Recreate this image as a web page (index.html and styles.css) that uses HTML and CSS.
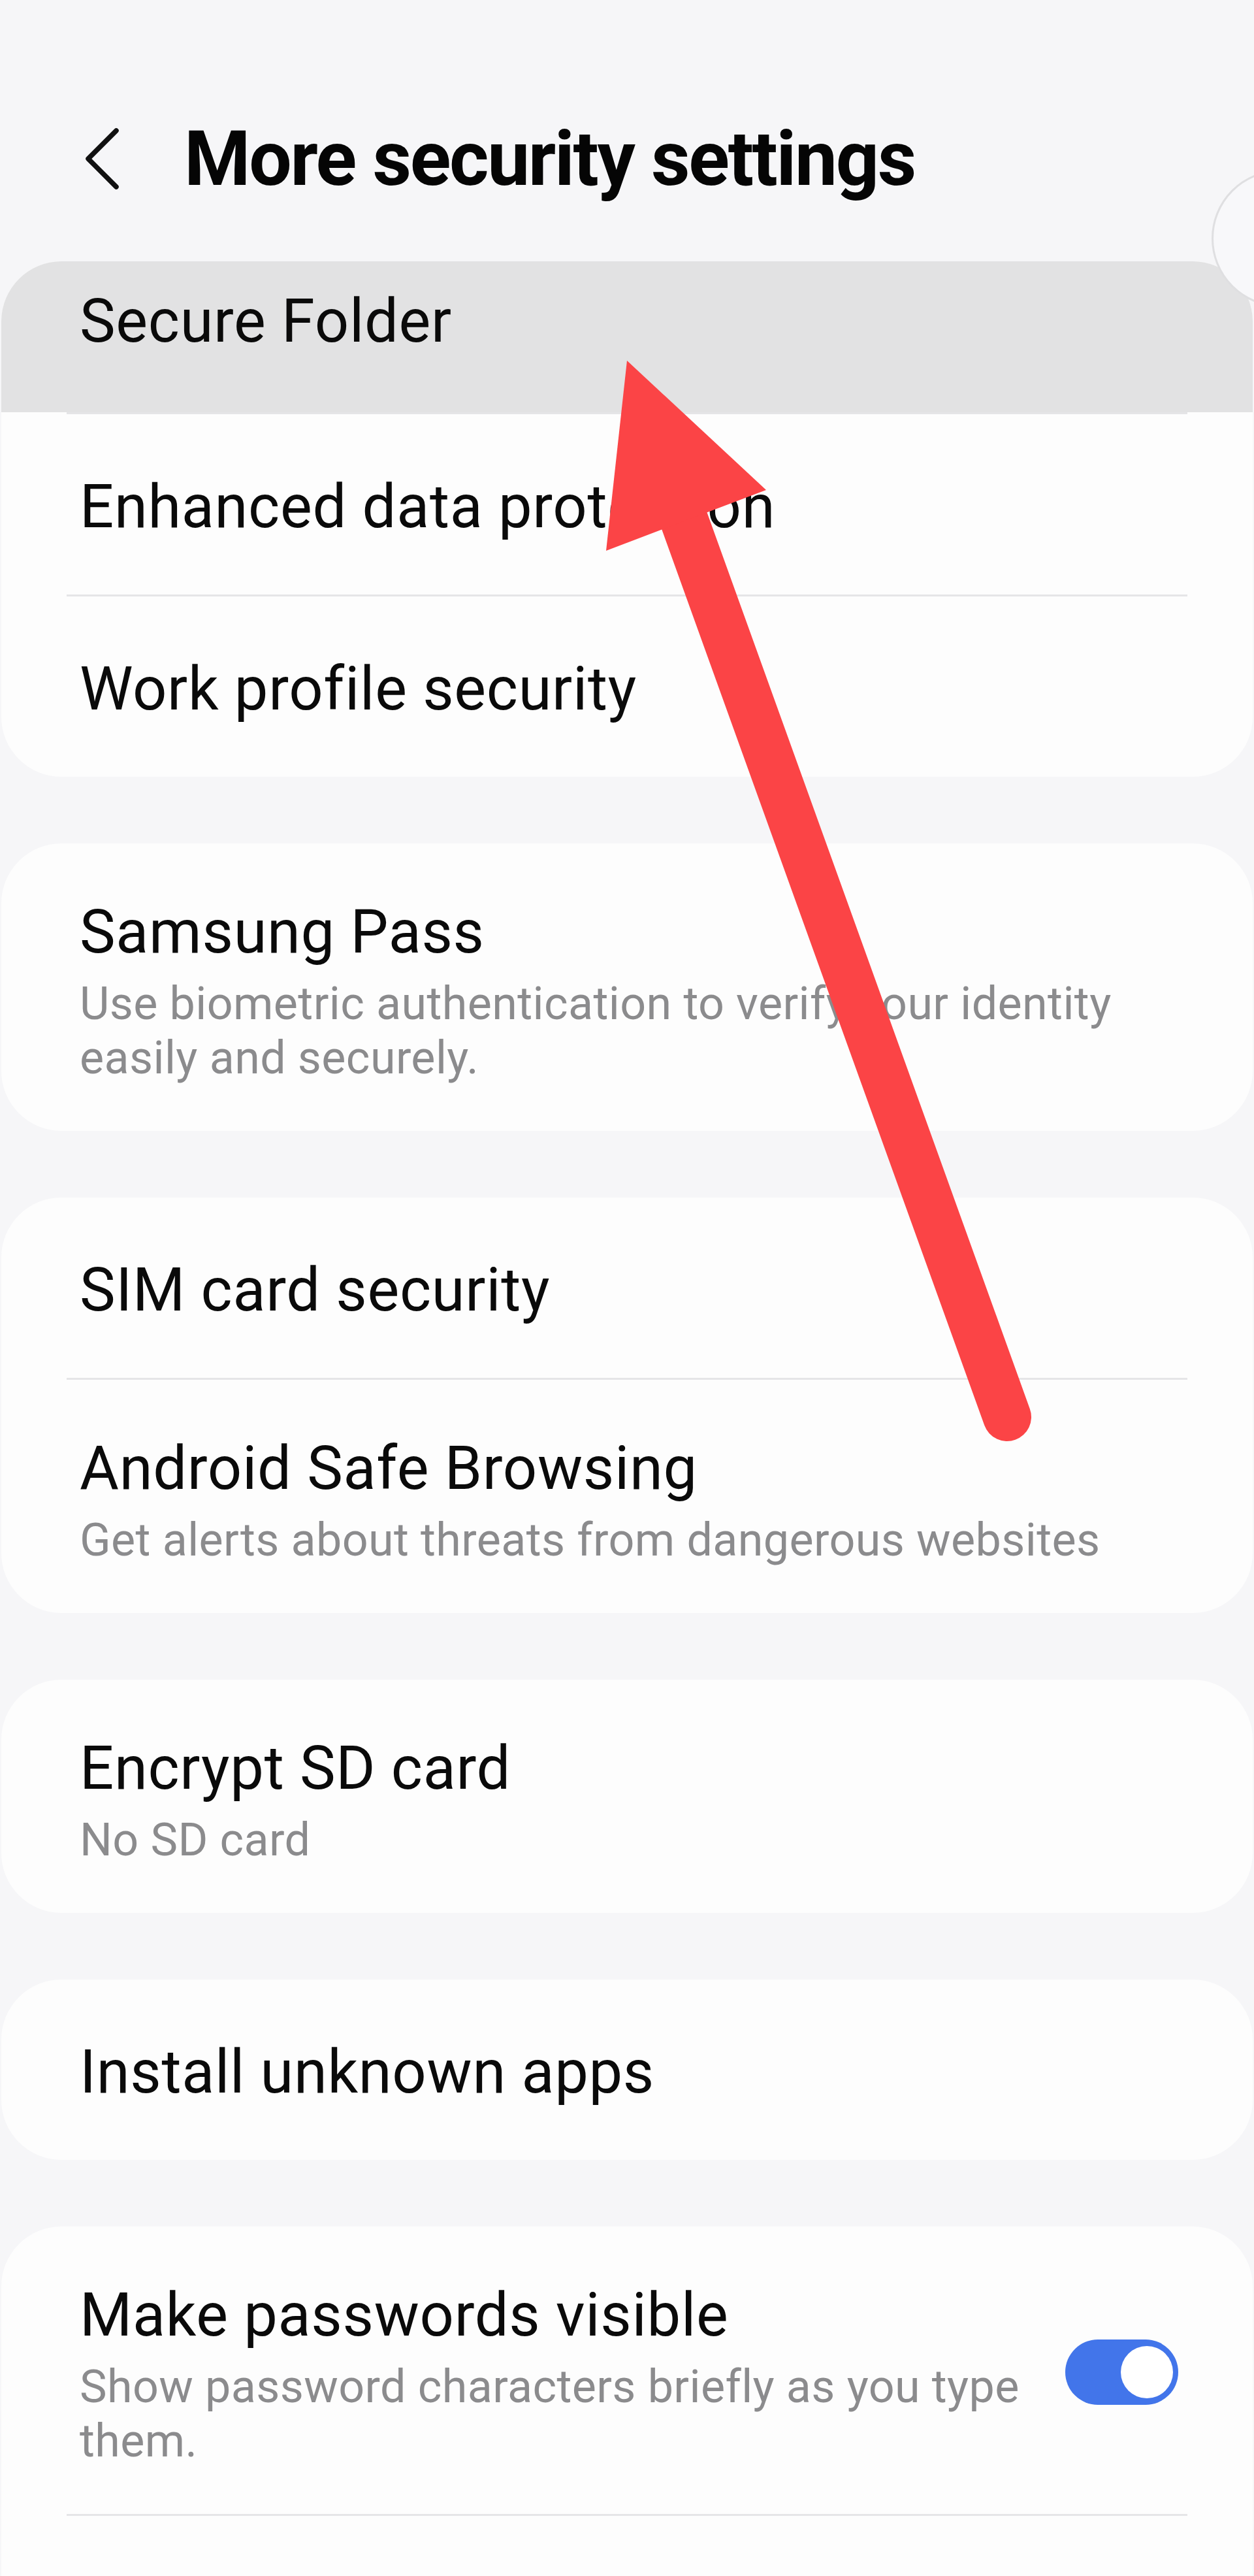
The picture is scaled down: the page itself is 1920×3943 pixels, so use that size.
FILE: index.html
```html
<!DOCTYPE html>
<html lang="en">

<head>
    <meta charset="UTF-8">
    <meta name="viewport" content="width=device-width, initial-scale=1.0">
    <title>More security settings</title>
    <link rel="stylesheet" href="styles.css">
</head>

<body>

    <div class="screen">

        <div class="top-bar">
            <svg class="back" viewBox="0 0 60 100" width="60" height="100">
                <polyline points="53,7 10,50 53,93" />
            </svg>
            <h1>More security settings</h1>
        </div>

        <div class="list">

            <div class="card">
                <div class="row row-first pressed">
                    <div class="row-text">
                        <div class="title">Secure Folder</div>
                    </div>
                </div>
                <div class="divider"></div>
                <div class="row">
                    <div class="row-text">
                        <div class="title">Enhanced data protection</div>
                    </div>
                </div>
                <div class="divider"></div>
                <div class="row">
                    <div class="row-text">
                        <div class="title">Work profile security</div>
                    </div>
                </div>
            </div>

            <div class="card">
                <div class="row has-sub">
                    <div class="row-text">
                        <div class="title">Samsung Pass</div>
                        <div class="sub">Use biometric authentication to verify your identity easily and securely.</div>
                    </div>
                </div>
            </div>

            <div class="card">
                <div class="row">
                    <div class="row-text">
                        <div class="title">SIM card security</div>
                    </div>
                </div>
                <div class="divider"></div>
                <div class="row has-sub">
                    <div class="row-text">
                        <div class="title">Android Safe Browsing</div>
                        <div class="sub">Get alerts about threats from dangerous websites</div>
                    </div>
                </div>
            </div>

            <div class="card">
                <div class="row has-sub">
                    <div class="row-text">
                        <div class="title">Encrypt SD card</div>
                        <div class="sub">No SD card</div>
                    </div>
                </div>
            </div>

            <div class="card">
                <div class="row">
                    <div class="row-text">
                        <div class="title">Install unknown apps</div>
                    </div>
                </div>
            </div>

            <div class="card">
                <div class="row has-sub">
                    <div class="row-text">
                        <div class="title">Make passwords visible</div>
                        <div class="sub">Show password characters briefly as you type them.</div>
                    </div>
                    <div class="switch on"></div>
                </div>
                <div class="divider"></div>
                <div class="row">
                    <div class="row-text">
                        <div class="title">&nbsp;</div>
                    </div>
                </div>
            </div>

        </div>

        <!-- scroll handle peeking in from the right edge -->
        <div class="edge-ring"></div>

        <!-- red annotation arrow drawn over the list -->
        <svg class="annotation" viewBox="0 0 1920 3943" width="1920" height="3943">
            <line x1="1020" y1="720" x2="1542" y2="2169" />
            <polygon points="960,552 928,843 1173,750" />
        </svg>

    </div>

</body>

</html>
```

FILE: styles.css
```css
body {
    font-family: Roboto, "Noto Sans", "Liberation Sans", sans-serif;
    margin: 0;
    background-color: #f6f6f8;
}

.screen {
    position: relative;
    width: 1920px;
    height: 3943px;
    overflow: hidden;
}

.top-bar {
    height: 400px;
    box-sizing: border-box;
    padding: 185px 0 0 125px;
    display: flex;
    align-items: center;
    align-content: flex-start;
    flex-wrap: wrap;
}

.top-bar .back {
    fill: none;
    stroke: #111;
    stroke-width: 7.5;
    stroke-linecap: round;
    stroke-linejoin: round;
}

.top-bar h1 {
    margin: 0 0 0 97px;
    font-size: 116px;
    line-height: 116px;
    font-weight: 700;
    letter-spacing: -2.3px;
    color: #050505;
}

.card {
    background-color: #fdfdfd;
    border-radius: 92px;
    margin: 0 2px 102px;
    overflow: hidden;
}

.row {
    display: flex;
    align-items: center;
    padding: 82px 114px 74px 120px;
}

.row.has-sub {
    padding: 76px 114px 70px 120px;
}

.row-first {
    padding-top: 32px;
    padding-bottom: 79px;
}

.row.pressed {
    background-color: #e2e2e3;
}

.row-text {
    flex: 1;
    min-width: 0;
}

.title {
    font-size: 92px;
    line-height: 120px;
    letter-spacing: 0.7px;
    color: #0a0a0a;
}

.sub {
    font-size: 70px;
    line-height: 83px;
    margin-top: 8px;
    letter-spacing: 0.4px;
    color: #8b8b8d;
}

.divider {
    height: 3px;
    margin: 0 100px;
    background-color: #e5e5e7;
}

.switch {
    position: relative;
    flex-shrink: 0;
    width: 173px;
    height: 100px;
    margin-left: 26px;
    border-radius: 50px;
    background-color: #4275ea;
}

.switch::after {
    content: "";
    position: absolute;
    top: 10px;
    right: 8px;
    width: 80px;
    height: 80px;
    border-radius: 50%;
    background-color: #fff;
}

.edge-ring {
    position: absolute;
    left: 1855px;
    top: 260px;
    width: 210px;
    height: 210px;
    box-sizing: border-box;
    border: 3px solid #dfdfe1;
    border-radius: 50%;
    background-color: #f8f8fa;
}

.annotation {
    position: absolute;
    top: 0;
    left: 0;
    pointer-events: none;
}

.annotation line {
    stroke: #fb4446;
    stroke-width: 74;
    stroke-linecap: round;
}

.annotation polygon {
    fill: #fb4446;
}
```
